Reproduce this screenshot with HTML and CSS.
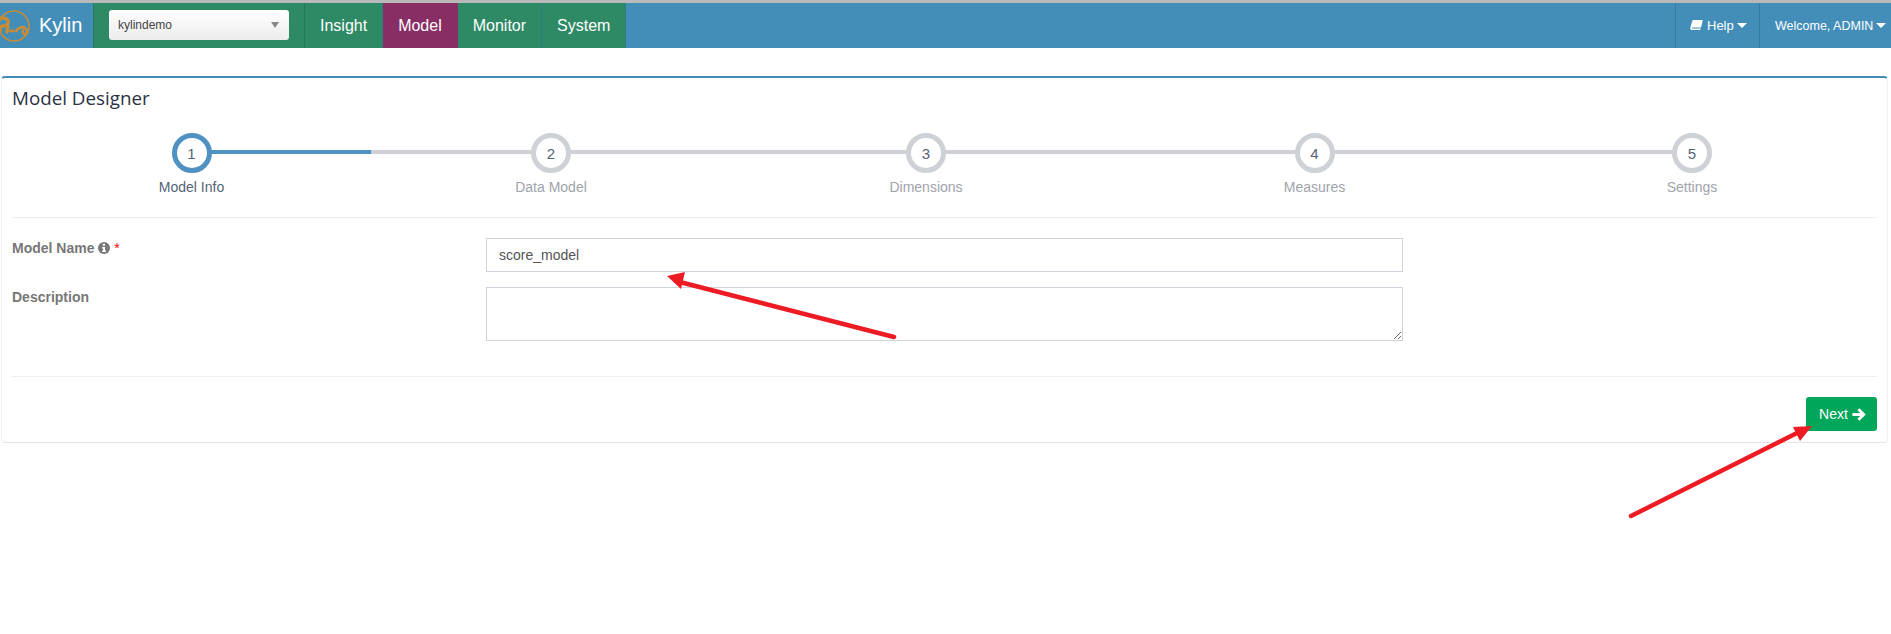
FILE: index.html
```html
<!DOCTYPE html>
<html lang="en">
<head>
<meta charset="utf-8">
<title>Model Designer</title>
<link rel="stylesheet" href="styles.css">
</head>
<body>
<header class="navbar">
  <div class="brand">
    <svg class="logo" viewBox="0 0 40 40" width="40" height="40" fill="none" stroke="#c98c35">
      <circle cx="17" cy="20" r="15" stroke-width="1.5"/>
      <path d="M1 13c4-2 9-1 10 2s-2 5-5 5c-3 0-4 3-2 6M10 19c1 3 1 6-1 8" stroke-width="3.4"/>
      <path d="M3 22l-3 3M13 26c1-2 3-2 4 0" stroke-width="2.6"/>
      <path d="M19 26c1-4 6-6 9-4 3 2 3 6 0 6s-3-3-1-4" stroke-width="2.6"/>
    </svg>
    <span class="brand-name">Kylin</span>
  </div>
  <div class="project">
    <div class="select">
      <span>kylindemo</span>
      <i class="select-arrow"></i>
    </div>
  </div>
  <nav class="menu">
    <a class="menu-item">Insight</a>
    <a class="menu-item active">Model</a>
    <a class="menu-item">Monitor</a>
    <a class="menu-item">System</a>
  </nav>
  <div class="user-menu">
    <a class="user-item help">
      <svg class="book" viewBox="0 0 14 12" width="13" height="11" fill="#fff">
        <path d="M3.6 0H13.2c.5 0 .7.4.6.8L11.6 9.2c-.3 1.1-.9 1.7-2 1.7H2C.8 10.9 0 10 .2 8.8L2.3 1C2.5.4 3 0 3.6 0z"/>
        <path d="M2.4 8.1h9.9l-.5 1.2H2.6c-.6 0-.6-1.2-.2-1.2z" fill="#438eb9"/>
      </svg>
      Help<i class="caret"></i>
    </a>
    <a class="user-item welcome">Welcome, ADMIN<i class="caret"></i></a>
  </div>
</header>

<main class="card">
  <h1 class="card-title">Model Designer</h1>
  <ol class="steps">
    <li class="step current"><span class="badge">1</span><span class="step-label">Model Info</span></li>
    <li class="step"><span class="badge">2</span><span class="step-label">Data Model</span></li>
    <li class="step"><span class="badge">3</span><span class="step-label">Dimensions</span></li>
    <li class="step"><span class="badge">4</span><span class="step-label">Measures</span></li>
    <li class="step last"><span class="badge">5</span><span class="step-label">Settings</span></li>
  </ol>
  <form class="form">
    <div class="form-row">
      <label class="form-label" for="model-name">Model Name
        <svg class="info" viewBox="0 0 12 12" width="12" height="12">
          <circle cx="6" cy="6" r="6" fill="#777"/>
          <path d="M4.8 1.8h2.2v2H4.8zM4.2 5h2.9v3.6h.9v1.5H4.2V8.6h.9V6.5h-.9z" fill="#fff"/>
        </svg>
        <span class="required">*</span>
      </label>
      <input class="field" id="model-name" type="text" value="score_model">
    </div>
    <div class="form-row">
      <label class="form-label" for="description">Description</label>
      <textarea class="field area" id="description"></textarea>
    </div>
  </form>
  <footer class="actions">
    <button class="next" type="button">Next
      <svg viewBox="0 0 13 12" width="14" height="13" fill="#fff">
        <path d="M6.9.2 12.8 6l-5.9 5.8-1.9-1.9L7.6 7.5H.4v-3h7.2L5 2.1z"/>
      </svg>
    </button>
  </footer>
</main>

<svg class="annotations" width="1891" height="634" viewBox="0 0 1891 634">
  <g stroke="#ed1c24" stroke-width="4.5" stroke-linecap="round" fill="none">
    <path d="M894 337 676 281"/>
    <path d="M1631 516 1803 430"/>
  </g>
  <g fill="#ed1c24">
    <path d="M667 276 685 272 681 289z"/>
    <path d="M1812 426 1793 427 1800 441z"/>
  </g>
</svg>
</body>
</html>
```
FILE: styles.css
```css
* { box-sizing: border-box; }

html, body {
  margin: 0;
  height: 634px;
  overflow: hidden;
  background: #fff;
}

body {
  position: relative;
  font-family: "Liberation Sans", Arial, sans-serif;
  font-size: 14px;
  color: #393939;
}

.navbar {
  display: flex;
  height: 48px;
  background: #438eb9;
  border-top: 3px solid #b9b9b9;
  color: #fff;
}

.brand {
  display: flex;
  align-items: center;
  width: 93px;
  overflow: hidden;
}

.logo {
  flex: none;
  margin-left: -3px;
  margin-right: 2px;
  overflow: hidden;
}

.brand-name { font-size: 20px; }

.project {
  display: flex;
  align-items: center;
  width: 212px;
  padding-left: 15px;
  padding-bottom: 1px;
  background: #2e8965;
  border-left: 1px solid #26795a;
  border-right: 1px solid #26795a;
}

.select {
  display: flex;
  align-items: center;
  justify-content: space-between;
  width: 180px;
  height: 30px;
  padding: 0 10px 0 9px;
  margin-top: -1px;
  border-radius: 3px;
  background: linear-gradient(#fff, #ececec);
  color: #444;
  font-size: 12px;
}

.select-arrow {
  width: 0;
  height: 0;
  border-left: 4px solid transparent;
  border-right: 4px solid transparent;
  border-top: 6px solid #888;
}

.menu { display: flex; }

.menu-item {
  display: flex;
  align-items: center;
  padding: 0 15px;
  background: #2e8965;
  border-right: 1px solid #2a7d80;
  font-size: 16px;
}

.menu-item.active { background: #892e65; border-right-color: #892e65; }

.user-menu {
  display: flex;
  margin-left: auto;
  font-size: 13px;
}

.user-item {
  display: flex;
  align-items: center;
  border-left: 1px solid #357ba1;
}

.help { width: 84px; padding-left: 14px; }
.welcome { width: 132px; padding-left: 15px; font-size: 12.5px; }

.book { margin-right: 4px; }

.caret {
  width: 0;
  height: 0;
  margin-left: 3px;
  border-left: 5px solid transparent;
  border-right: 5px solid transparent;
  border-top: 5px solid #fff;
}

.card {
  height: 367px;
  margin: 28px 3px 0 1px;
  padding: 0 10px 0 10px;
  background: #fff;
  border-top: 2px solid #438eb9;
  border-bottom: 1px solid #e4e4e4;
  border-left: 1px solid #f1f1f1;
  border-right: 1px solid #f1f1f1;
  border-radius: 4px;
}

.card-title {
  margin: 0;
  padding-top: 8px;
  height: 37px;
  font-family: "Open Sans", sans-serif;
  font-size: 18.8px;
  font-weight: 400;
  line-height: 24px;
  color: #2b3144;
}

.steps {
  display: grid;
  grid-template-columns: 359px 360px 390px 387px 368px;
  height: 103px;
  margin: 0;
  padding: 18px 0 0;
  list-style: none;
  border-bottom: 1px solid #eee;
}

.step {
  position: relative;
  display: flex;
  flex-direction: column;
  align-items: center;
  color: #a0a3ab;
}

.step::before {
  content: "";
  position: absolute;
  top: 17px;
  left: 0;
  right: 0;
  height: 4px;
  background: #ced1d6;
}

.step.current::before { left: 50%; background: #4f92c2; }
.step.last::before { right: 50%; }

.badge {
  position: relative;
  display: flex;
  align-items: center;
  justify-content: center;
  width: 40px;
  height: 40px;
  border: 5px solid #ced1d6;
  border-radius: 50%;
  background: #fff;
  color: #546474;
  font-size: 15px;
}

.current .badge { border-color: #4f92c2; }

.step-label {
  margin-top: 5px;
  line-height: 18px;
}

.current .step-label { color: #546474; }

.form {
  height: 159px;
  padding-top: 20px;
  border-bottom: 1px solid #eee;
}

.form-row {
  display: flex;
  align-items: flex-start;
  margin-bottom: 15px;
}

.form-label {
  width: 474px;
  line-height: 20px;
  font-weight: 700;
  color: #777;
}

.info { vertical-align: -1px; }

.required { color: #e00; font-weight: 400; }

.field {
  display: block;
  width: 917px;
  height: 34px;
  padding: 5px 12px;
  border: 1px solid #d0d3d9;
  border-radius: 0;
  outline: 0;
  background: #fff;
  color: #555;
  font: 14px "Liberation Sans", Arial, sans-serif;
}

.area { height: 54px; }

.actions {
  display: flex;
  justify-content: flex-end;
  padding-top: 20px;
}

.next {
  display: flex;
  align-items: center;
  justify-content: center;
  gap: 4px;
  width: 71px;
  height: 34px;
  padding: 0 0 0 2px;
  border: 0;
  border-radius: 3px;
  background: #00a65a;
  color: #fff;
  font: 14px "Liberation Sans", Arial, sans-serif;
}

.annotations {
  position: absolute;
  top: 0;
  left: 0;
  pointer-events: none;
}
```
